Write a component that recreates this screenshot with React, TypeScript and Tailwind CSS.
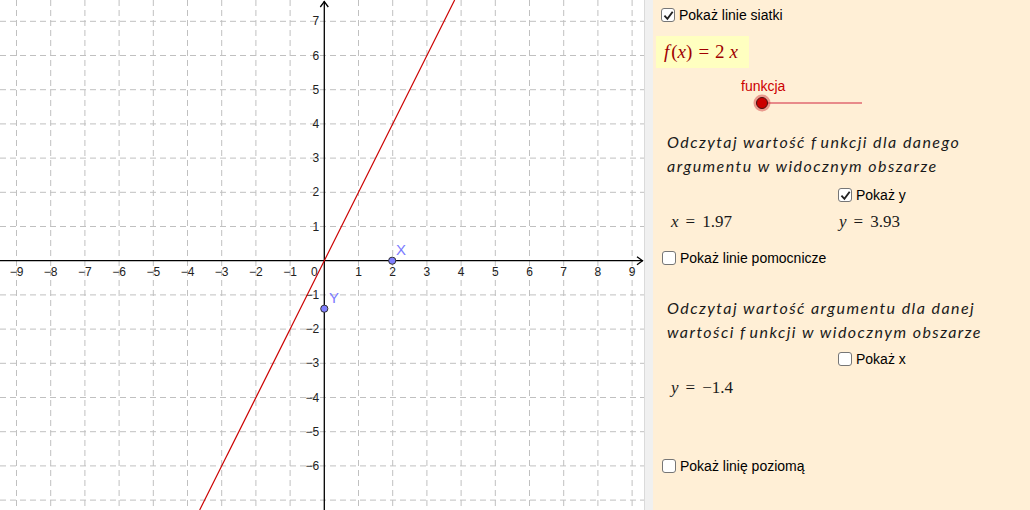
import React from "react";

const UNIT = 34.2;
const OX = 324.3;
const OY = 260.7;
const W = 644;
const H = 510;

const px = (x: number) => OX + x * UNIT;
const py = (y: number) => OY - y * UNIT;

const Graph = () => {
  const xs = Array.from({ length: 19 }, (_, i) => i - 9);
  const ys = Array.from({ length: 15 }, (_, i) => i - 7);
  // y = 2x: value of x where the line leaves the top and bottom edges
  const xTop = OY / UNIT / 2;
  const xBottom = -(H - OY) / UNIT / 2;
  return (
    <svg width={W} height={H} className="block shrink-0 bg-white" style={{ fontFamily: "'Liberation Sans', Arial, sans-serif" }}>
      {/* grid */}
      <g stroke="#c0c0c0" strokeWidth={1} strokeDasharray="6 4">
        {xs.map((k) => (k === 0 ? null : <line key={"gx" + k} x1={px(k)} y1={0} x2={px(k)} y2={H} />))}
        {ys.map((k) => (k === 0 ? null : <line key={"gy" + k} x1={0} y1={py(k)} x2={W} y2={py(k)} />))}
      </g>

      {/* axes */}
      <g stroke="#000" strokeWidth={1.3} fill="none">
        <line x1={OX} y1={1} x2={OX} y2={H} />
        <line x1={0} y1={OY} x2={W - 1} y2={OY} />
        <polyline points={`${OX - 4},${7} ${OX},${1.5} ${OX + 4},${7}`} />
        <polyline points={`${W - 7},${OY - 4} ${W - 1.5},${OY} ${W - 7},${OY + 4}`} />
      </g>

      {/* axis labels */}
      <g fontSize={12} fill="#222">
        {xs.map((k) =>
          k === 0 ? null : (
            <text key={"lx" + k} x={px(k)} y={OY + 15} textAnchor="middle">
              {k < 0 ? "\u2212" + -k : k}
            </text>
          )
        )}
        <text x={OX - 10} y={OY + 15} textAnchor="middle">0</text>
        {ys.map((k) =>
          k === 0 || k === -7 ? null : (
            <text key={"ly" + k} x={OX - 5} y={py(k) + 4} textAnchor="end">
              {k < 0 ? "\u2212" + -k : k}
            </text>
          )
        )}
      </g>

      {/* f(x) = 2x */}
      <line x1={px(xBottom)} y1={H} x2={px(xTop)} y2={0} stroke="#cc0000" strokeWidth={1.2} />

      {/* points */}
      <circle cx={392.2} cy={OY} r={3.6} fill="#7f7fff" stroke="#333" strokeWidth={1} />
      <circle cx={OX} cy={308.7} r={3.6} fill="#7f7fff" stroke="#333" strokeWidth={1} />
      <g fontSize={15} fill="#7b7bff">
        <text x={396} y={255}>X</text>
        <text x={329} y={303}>Y</text>
      </g>
    </svg>
  );
};

const Checkbox = ({ checked }: { checked?: boolean }) => (
  <div className="flex h-[14px] w-[14px] shrink-0 items-center justify-center rounded-[3px] border-[1.5px] border-[#767676] bg-white">
    {checked && (
      <svg width="11" height="11" viewBox="0 0 10 10">
        <path d="M1.3 5.2 L4 8 L8.8 1.6" fill="none" stroke="#222" strokeWidth="1.7" />
      </svg>
    )}
  </div>
);

const CheckRow = ({ label, checked, className }: { label: string; checked?: boolean; className: string }) => (
  <div className={`flex h-[20px] items-center gap-[4px] ${className}`}>
    <Checkbox checked={checked} />
    <span className="text-[14px] leading-none text-black">{label}</span>
  </div>
);

const Para = ({ children, className }: { children: React.ReactNode; className: string }) => (
  <div
    className={`pl-[14px] text-[16px] italic tracking-[1.45px] text-[#1a1a1a] ${className}`}
    style={{ fontFamily: "Lato, 'Open Sans', sans-serif" }}
  >
    {children}
  </div>
);

const serif = { fontFamily: "'Liberation Serif', 'DejaVu Serif', serif" };

const F = () => <span className="mr-[3px]">f</span>;

export default function App() {
  return (
    <div className="flex h-[510px] w-[1030px] overflow-hidden" style={{ fontFamily: "'Liberation Sans', Arial, sans-serif" }}>
      <Graph />
      <div className="w-[9px] shrink-0 border-l border-[#dadada] bg-[#f0f0f0]" />
      <div className="flex flex-1 flex-col bg-[#ffefd6]">
        <CheckRow label="Pokaż linie siatki" checked className="mt-[5px] pl-[8px]" />

        <div className="ml-[3px] mt-[11px] flex h-[32px] w-[93px] items-center bg-[#ffffc0] pl-[8px] text-[19px] text-[#a00000]" style={serif}>
          <i>f</i>
          <span className="ml-[2px]">(</span>
          <i>x</i>
          <span>)</span>
          <span className="mx-[6px]">=</span>
          <span>2</span>
          <i className="ml-[5px]">x</i>
        </div>

        <div className="ml-[88px] mt-[10px] text-[14px] leading-[16px] text-[#cc0000]">funkcja</div>
        <div className="relative ml-[101px] mt-[1px] h-[16px] w-[108px]">
          <div className="absolute left-[8px] right-0 top-[7px] h-[2px] bg-[#e88a8a]" />
          <div className="absolute left-[2px] top-[2px] h-[12px] w-[12px] rounded-full border border-[#4a1010] bg-[#cc0000] shadow-[0_0_0_2.5px_rgba(214,70,70,0.5)]" />
        </div>

        <Para className="mt-[19px] leading-[24px]">
          <div>
            Odczytaj wartość <F />unkcji dla danego
          </div>
          <div>argumentu w widocznym obszarze</div>
        </Para>

        <CheckRow label="Pokaż y" checked className="mt-[7px] pl-[185px]" />

        <div className="mt-[6px] flex h-[22px] items-center pl-[18px] text-[17px] text-[#1a1a1a]" style={serif}>
          <div className="w-[168px]">
            <i>x</i>
            <span className="mx-[7px]">=</span>1.97
          </div>
          <div>
            <i>y</i>
            <span className="mx-[7px]">=</span>3.93
          </div>
        </div>

        <CheckRow label="Pokaż linie pomocnicze" className="mt-[15px] pl-[9px]" />

        <Para className="mt-[28px] leading-[24px]">
          <div>Odczytaj wartość argumentu dla danej</div>
          <div>
            wartości <F />unkcji w widocznym obszarze
          </div>
        </Para>

        <CheckRow label="Pokaż x" className="mt-[5px] pl-[185px]" />

        <div className="mt-[8px] flex h-[22px] items-center pl-[18px] text-[17px] text-[#1a1a1a]" style={serif}>
          <i>y</i>
          <span className="mx-[7px]">=</span>
          <span>−1.4</span>
        </div>

        <CheckRow label="Pokaż linię poziomą" className="mt-[57px] pl-[9px]" />
      </div>
    </div>
  );
}
